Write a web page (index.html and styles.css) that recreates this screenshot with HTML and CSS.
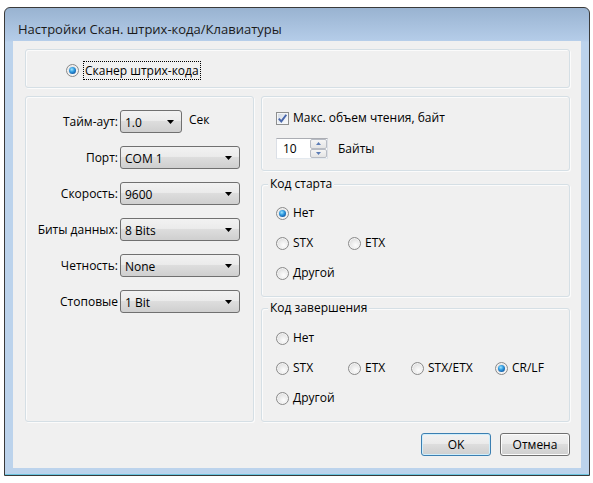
FILE: index.html
```html
<!DOCTYPE html>
<html lang="ru">
<head>
<meta charset="utf-8">
<link rel="stylesheet" href="styles.css">
</head>
<body>
<div class="window">
  <div class="titlebar">Настройки Скан. штрих-кода/Клавиатуры</div>
  <div class="client">
    <div class="group top-group">
      <label class="opt"><span class="radio checked"></span><span class="focus">Сканер штрих-кода</span></label>
    </div>
    <div class="main">
      <div class="group left-group">
        <div class="form">
          <span class="lbl">Тайм-аут:</span>
          <div class="field"><div class="combo short"><span>1.0</span><svg class="arrow" width="7" height="4" viewBox="0 0 7 4"><polygon points="0,0 7,0 3.5,4" fill="#000"/></svg></div><span class="unit">Сек</span></div>
          <span class="lbl">Порт:</span>
          <div class="field"><div class="combo"><span>COM 1</span><svg class="arrow" width="7" height="4" viewBox="0 0 7 4"><polygon points="0,0 7,0 3.5,4" fill="#000"/></svg></div></div>
          <span class="lbl">Скорость:</span>
          <div class="field"><div class="combo"><span>9600</span><svg class="arrow" width="7" height="4" viewBox="0 0 7 4"><polygon points="0,0 7,0 3.5,4" fill="#000"/></svg></div></div>
          <span class="lbl">Биты данных:</span>
          <div class="field"><div class="combo"><span>8 Bits</span><svg class="arrow" width="7" height="4" viewBox="0 0 7 4"><polygon points="0,0 7,0 3.5,4" fill="#000"/></svg></div></div>
          <span class="lbl">Четность:</span>
          <div class="field"><div class="combo"><span>None</span><svg class="arrow" width="7" height="4" viewBox="0 0 7 4"><polygon points="0,0 7,0 3.5,4" fill="#000"/></svg></div></div>
          <span class="lbl">Стоповые</span>
          <div class="field"><div class="combo"><span>1 Bit</span><svg class="arrow" width="7" height="4" viewBox="0 0 7 4"><polygon points="0,0 7,0 3.5,4" fill="#000"/></svg></div></div>
        </div>
      </div>
      <div class="right">
        <div class="group r1">
          <label class="opt check-row"><span class="checkbox"><svg width="11" height="11" viewBox="0 0 11 11"><path d="M1.8 5.6 L4.3 8.4 L9.3 1.8" fill="none" stroke="#4866ab" stroke-width="1.9"/></svg></span><span>Макс. объем чтения, байт</span></label>
          <div class="spin-row">
            <div class="spin">
              <span class="spin-val">10</span>
              <div class="spin-btns">
                <span class="sbtn"><svg width="5" height="3" viewBox="0 0 5 3"><polygon points="0,3 5,3 2.5,0" fill="#5b7cb6"/></svg></span>
                <span class="sbtn"><svg width="5" height="3" viewBox="0 0 5 3"><polygon points="0,0 5,0 2.5,3" fill="#5b7cb6"/></svg></span>
              </div>
            </div>
            <span>Байты</span>
          </div>
        </div>
        <div class="group r2">
          <span class="gtitle">Код старта</span>
          <div class="radios">
            <label class="opt nl"><span class="radio checked"></span>Нет</label>
            <label class="opt nl"><span class="radio"></span>STX</label>
            <label class="opt"><span class="radio"></span>ETX</label>
            <label class="opt nl"><span class="radio"></span>Другой</label>
          </div>
        </div>
        <div class="group r3">
          <span class="gtitle">Код завершения</span>
          <div class="radios">
            <label class="opt nl"><span class="radio"></span>Нет</label>
            <label class="opt nl"><span class="radio"></span>STX</label>
            <label class="opt"><span class="radio"></span>ETX</label>
            <label class="opt"><span class="radio"></span>STX/ETX</label>
            <label class="opt"><span class="radio checked"></span>CR/LF</label>
            <label class="opt nl"><span class="radio"></span>Другой</label>
          </div>
        </div>
      </div>
    </div>
    <div class="buttons">
      <button class="btn default">OK</button>
      <button class="btn">Отмена</button>
    </div>
  </div>
</div>
</body>
</html>
```
FILE: styles.css
```css
html, body {
  margin: 0;
  background: #fff;
}
body {
  font-family: "Open Sans", "Noto Sans", sans-serif;
  font-size: 12px;
  color: #000;
}
.window {
  box-sizing: border-box;
  width: 586px;
  height: 469px;
  margin: 7px 0 0 4px;
  border: 1px solid #3a3a3a;
  border-radius: 6px 6px 0 0;
  padding: 0 8px 7px 8px;
  background: linear-gradient(#99b3d1 0, #b4cce8 32px, #bcd3ec 34px, #bcd3ec 100%);
  box-shadow: inset 0 -1px 0 #6cc4df;
  display: flex;
  flex-direction: column;
}
.titlebar {
  height: 33px;
  box-sizing: border-box;
  padding: 12px 0 0 5px;
  font-size: 13px;
  line-height: 18px;
  color: #1a1a1a;
  white-space: nowrap;
}
.client {
  height: 427px;
  box-sizing: border-box;
  background: #f0f0f0;
  padding: 8px 11px 0 12px;
}
.group {
  box-sizing: border-box;
  border: 1px solid #d5dfe5;
  border-radius: 3px;
  box-shadow: inset 1px 1px 0 #fbfbfb, 1px 1px 0 #fbfbfb;
}
.top-group {
  height: 39px;
  display: flex;
  align-items: center;
  padding: 3px 0 0 40px;
}
.opt {
  display: flex;
  align-items: center;
  gap: 4px;
  white-space: nowrap;
  height: 16px;
  line-height: 16px;
}
.focus {
  border: 1px dotted #000;
  padding: 0 1px;
  line-height: 17px;
}
.radio {
  box-sizing: border-box;
  width: 13px;
  height: 13px;
  flex: none;
  border-radius: 50%;
  border: 1px solid #8a8a8a;
  background: radial-gradient(circle at 60% 65%, #fdfdfd 0, #ebebeb 45%, #cfcfcf 100%);
  box-shadow: inset 0 0 0 1px #f4f4f4;
  display: flex;
  align-items: center;
  justify-content: center;
}
.radio.checked::after {
  content: "";
  width: 7px;
  height: 7px;
  border-radius: 50%;
  background: radial-gradient(circle at 40% 35%, #9fe6ff 0, #2f9ae0 40%, #155ea8 75%, #0c3f78 100%);
}
.main {
  display: flex;
  gap: 7px;
  margin-top: 8px;
}
.left-group {
  width: 229px;
  height: 326px;
  padding-top: 13px;
}
.form {
  display: grid;
  grid-template-columns: 92px auto;
  column-gap: 2px;
  row-gap: 13px;
  grid-auto-rows: 23px;
  align-items: center;
}
.lbl {
  text-align: right;
  white-space: nowrap;
}
.field {
  display: flex;
  align-items: center;
  gap: 7px;
}
.combo {
  box-sizing: border-box;
  width: 120px;
  height: 23px;
  border: 1px solid #707070;
  border-radius: 3px;
  background: linear-gradient(#f2f2f2 0, #ebebeb 45%, #dddddd 50%, #cfcfcf 100%);
  display: flex;
  align-items: center;
  justify-content: space-between;
  padding: 1px 7px 0 4px;
}
.combo.short {
  width: 62px;
}
.unit {
  margin-top: -4px;
}
.right {
  width: 309px;
  display: flex;
  flex-direction: column;
}
.r1 {
  height: 75px;
  padding: 13px 0 0 14px;
}
.checkbox {
  box-sizing: border-box;
  width: 13px;
  height: 13px;
  flex: none;
  border: 1px solid #8e8f8f;
  background: linear-gradient(135deg, #cfd6e0 0, #eef1f5 60%, #fafbfc 100%);
  box-shadow: inset 0 0 0 1px #f4f6f9;
  display: flex;
  align-items: center;
  justify-content: center;
}
.spin-row {
  margin-top: 12px;
  height: 21px;
  display: flex;
  align-items: center;
  gap: 10px;
}
.spin {
  box-sizing: border-box;
  width: 52px;
  height: 21px;
  background: #fff;
  border: 1px solid #dbdfe6;
  border-top-color: #abadb3;
  border-bottom-color: #e3e9ef;
  display: flex;
  align-items: stretch;
  justify-content: space-between;
}
.spin-val {
  padding-left: 6px;
  line-height: 19px;
}
.spin-btns {
  width: 17px;
  display: flex;
  flex-direction: column;
}
.sbtn {
  flex: 1;
  box-sizing: border-box;
  border: 1px solid #b8bcc4;
  border-radius: 2px;
  background: linear-gradient(#f5f5f5, #e4e4e4);
  display: flex;
  align-items: center;
  justify-content: center;
}
.r2 {
  margin-top: 13px;
  height: 113px;
}
.r3 {
  margin-top: 11px;
  height: 114px;
}
.gtitle {
  display: block;
  width: fit-content;
  margin: -9px 0 0 6px;
  padding: 0 2px;
  line-height: 16px;
  background: #f0f0f0;
}
.radios {
  display: grid;
  grid-template-columns: 72px 63px 84px auto;
  grid-auto-rows: 16px;
  row-gap: 14px;
  padding: 13px 0 0 14px;
}
.r3 .radios {
  padding-top: 14px;
}
.nl {
  grid-column: 1;
}
.buttons {
  display: flex;
  justify-content: flex-end;
  gap: 9px;
  margin-top: 11px;
}
.btn {
  box-sizing: border-box;
  width: 70px;
  height: 23px;
  font: inherit;
  color: #000;
  border: 1px solid #707070;
  border-radius: 3px;
  background: linear-gradient(#f2f2f2 0, #ebebeb 45%, #dddddd 50%, #cfcfcf 100%);
  box-shadow: inset 0 0 0 1px #fcfcfc;
  padding: 0;
}
.btn.default {
  border-color: #3c7fb1;
  box-shadow: inset 0 0 0 1px #cfeefc;
}
```
